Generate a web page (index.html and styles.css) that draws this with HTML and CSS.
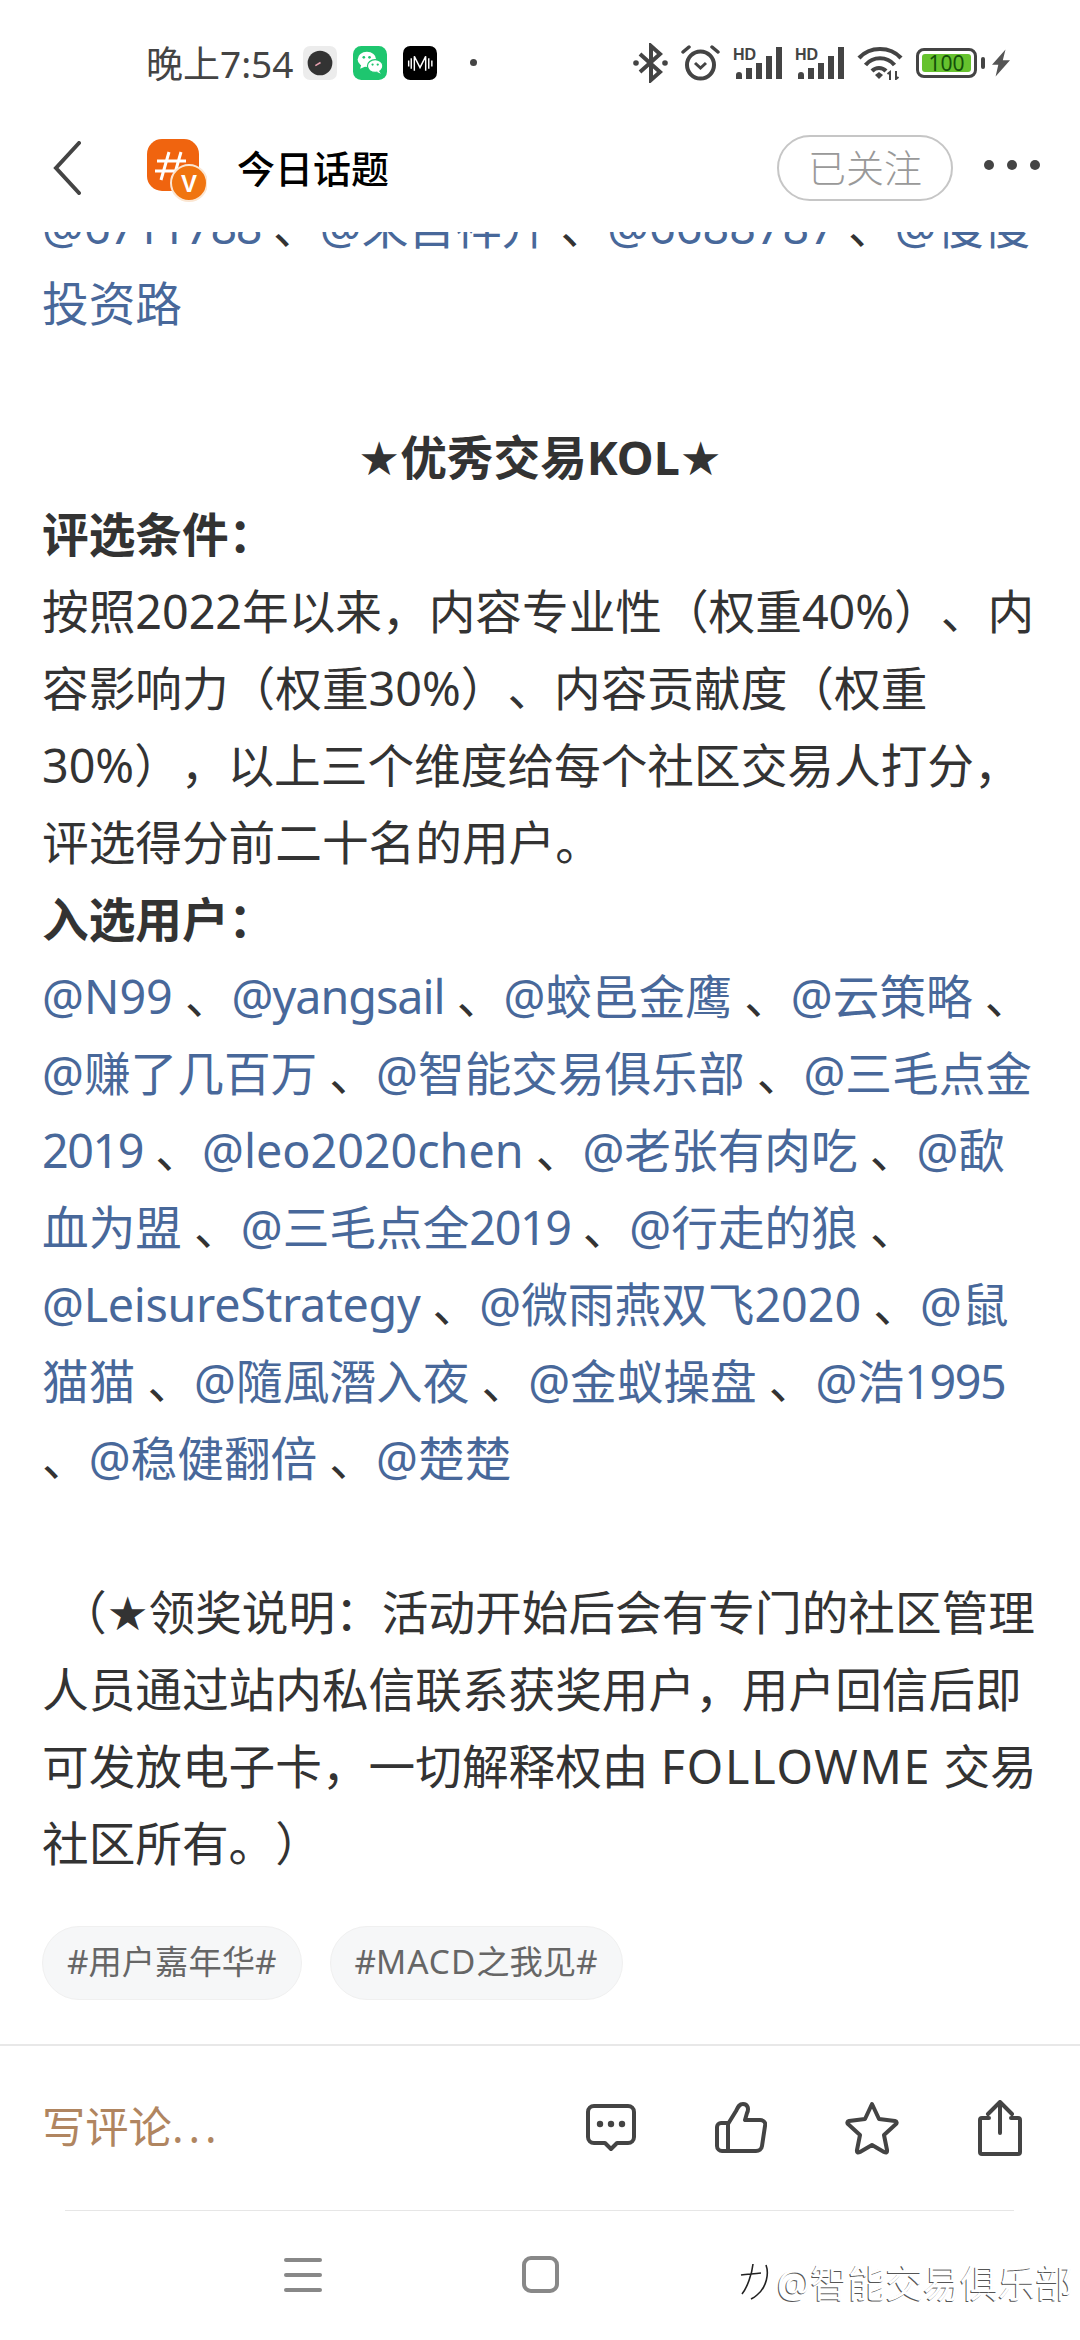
FILE: index.html
```html
<!DOCTYPE html>
<html>
<head>
  <meta charset="utf-8">
  <link rel="stylesheet" href="styles.css">
</head>
<body>
  <div class="statusbar">
    <div class="status-left">
      <span class="time">晚上7:54</span>
      <svg class="app-icon" width="34" height="34" viewBox="0 0 33 33"><rect width="33" height="33" rx="7" fill="#ececec"/><circle cx="16.5" cy="16.5" r="12" fill="#333"/><path d="M12 19l5-3" stroke="#e8a0b0" stroke-width="1.5"/></svg>
      <svg class="app-icon" width="34" height="34" viewBox="0 0 33 33"><rect width="33" height="33" rx="8" fill="#1ec66f"/><ellipse cx="13.5" cy="13" rx="9" ry="7.5" fill="#fff"/><path d="M8 18l-1 4 5-2z" fill="#fff"/><ellipse cx="21.5" cy="19.5" rx="7.5" ry="6.2" fill="#fff" stroke="#1ec66f" stroke-width="1.2"/><path d="M25 24l2 3-4-2z" fill="#fff"/><circle cx="10.5" cy="11" r="1.3" fill="#1ec66f"/><circle cx="16" cy="11" r="1.3" fill="#1ec66f"/><circle cx="19" cy="18" r="1.1" fill="#1ec66f"/><circle cx="24" cy="18" r="1.1" fill="#1ec66f"/></svg>
      <svg class="app-icon" width="34" height="34" viewBox="0 0 33 33"><rect width="33" height="33" rx="7" fill="#000"/><path d="M11 24V10l5.500 11L22 10v14M5.500 14v6M8 12v10M25 12v10M28 14v6" fill="none" stroke="#fff" stroke-width="1.400"/></svg>
      <span class="status-dot"></span>
    </div>
    <div class="status-right">
      <svg width="35" height="40" viewBox="0 0 35 40"><path d="M7 11l20 18-9 8V3l9 8L7 29" fill="none" stroke="#444" stroke-width="4"/><circle cx="3" cy="20" r="2.800" fill="#444"/><circle cx="32" cy="20" r="2.800" fill="#444"/></svg>
      <svg width="39" height="37" viewBox="0 0 39 37"><circle cx="19.500" cy="21" r="13.500" fill="none" stroke="#444" stroke-width="4"/><path d="M14 19l5.500 5 5.500-5" fill="none" stroke="#444" stroke-width="3"/><path d="M2 8l6-5M37 8l-6-5" stroke="#444" stroke-width="3.500" stroke-linecap="round"/></svg>
      <svg width="49" height="33" viewBox="0 0 49 33"><text x="0" y="14" class="hd">HD</text><path d="M3 33v-4a3 3 0 0 1 6 0v4zM13 33V22h6v11zM23 33V17h6v16zM33 33V10h6v23zM43 33V1h6v32z" fill="#444"/></svg>
      <svg width="49" height="33" viewBox="0 0 49 33"><text x="0" y="14" class="hd">HD</text><path d="M3 33v-4a3 3 0 0 1 6 0v4zM13 33V22h6v11zM23 33V17h6v16zM33 33V10h6v23zM43 33V1h6v32z" fill="#444"/></svg>
      <svg width="46" height="35" viewBox="0 0 46 35"><path d="M2 13C13 1 33 1 44 13M8.500 20C16 11 30 11 37.500 20M15 26c4-4 10-4 14 0" fill="none" stroke="#444" stroke-width="4.200"/><path d="M18 30l4-3 4 3-4 4z" fill="#444"/><path d="M33 35v-8l-2.500 2M39 26v8l2.500-2" fill="none" stroke="#444" stroke-width="2"/></svg>
      <div class="battery"><div class="battery-fill">100</div></div>
      <span class="battery-cap"></span>
      <svg class="bolt" width="18" height="30" viewBox="0 0 20 30"><path d="M15 0L0 17h7L4 30 20 12h-8z" fill="#555"/></svg>
    </div>
  </div>

  <div class="navbar">
    <svg class="back" width="28" height="54" viewBox="0 0 28 54"><path d="M26 2L3 27l23 25" fill="none" stroke="#444" stroke-width="4" stroke-linecap="round"/></svg>
    <svg class="logo" width="62" height="64" viewBox="0 0 60 64"><rect x="1" y="1" width="52" height="52" rx="15" fill="#f0640f"/><path d="M23 14L15 42M35 14l-8 28M11 23h29M9 33h24" stroke="#fff" stroke-width="3"/><circle cx="43" cy="45" r="18" fill="#f0740f" stroke="#fbe6d2" stroke-width="2"/><text x="43" y="54" class="logo-v">V</text></svg>
    <span class="nav-title">今日话题</span>
    <span class="follow">已关注</span>
    <div class="more"><span></span><span></span><span></span></div>
  </div>

  <div class="article">
    <div class="article-body">
      <a>@<span class="num">6711788</span></a> 、<a>@来自祥升</a> 、<a>@6688787</a> 、<a>@慢慢</a><br>
      <a>投资路</a><br>
      <br>
      <div class="center"><b>★优秀交易KOL★</b></div>
      <b>评选条件：</b><br>
      按照2022年以来，内容专业性（权重40%）、内<br>
      容影响力（权重30%）、内容贡献度（权重<br>
      30%），以上三个维度给每个社区交易人打分，<br>
      评选得分前二十名的用户。<br>
      <b>入选用户：</b><br>
      <a>@N99</a> 、<a class="tighter">@yangsail</a> 、<a>@蛟邑金鹰</a> 、<a>@云策略</a> 、<br>
      <a>@赚了几百万</a> 、<a>@智能交易俱乐部</a> 、<a>@三毛点金</a><br>
      <a class="num">2019</a> 、<a>@leo2020chen</a> 、<a>@老张有肉吃</a> 、<a>@歃</a><br>
      <a>血为盟</a> 、<a>@三毛点全<span class="num">2019</span></a> 、<a>@行走的狼</a> 、<br>
      <a class="tight">@LeisureStrategy</a> 、<a>@微雨燕双飞2020</a> 、<a>@鼠</a><br>
      <a>猫猫</a> 、<a>@隨風潛入夜</a> 、<a>@金蚁操盘</a> 、<a>@浩<span class="num">1995</span></a><br>
      、<a>@稳健翻倍</a> 、<a>@楚楚</a><br>
      <br>
      <span class="indent"></span>（★领奖说明：活动开始后会有专门的社区管理<br>
      人员通过站内私信联系获奖用户，用户回信后即<br>
      可发放电子卡，一切解释权由 <span class="wide">FOLLOWME</span> 交易<br>
      社区所有。）
    </div>
    <div class="tags">
      <span class="tag">#用户嘉年华#</span>
      <span class="tag">#<span class="tag-latin">MACD</span>之我见#</span>
    </div>
  </div>

  <div class="actionbar">
    <span class="comment-input">写评论<span class="dots">...</span></span>
    <div class="actions">
      <svg width="52" height="50" viewBox="0 0 52 50"><path d="M9 3h34a6 6 0 0 1 6 6v25a6 6 0 0 1-6 6H32l-6 6-6-6H9a6 6 0 0 1-6-6V9a6 6 0 0 1 6-6z" fill="none" stroke="#444" stroke-width="4" stroke-linejoin="round"/><circle cx="15" cy="21" r="3.200" fill="#444"/><circle cx="26" cy="21" r="3.200" fill="#444"/><circle cx="37" cy="21" r="3.200" fill="#444"/></svg>
      <svg width="52" height="52" viewBox="0 0 52 52"><path d="M13 22l8-13c2-4 3-7 7-7 5 0 6 5 4 9l-2 7h15c4 0 6 3 5 6l-3 20c-.5 3-3 5-6 5H7c-2.500 0-5-2-5-5V25c0-2 2-4 4-4h7v29" fill="none" stroke="#444" stroke-width="4" stroke-linejoin="round"/></svg>
      <svg width="54" height="54" viewBox="0 0 54 54"><path d="M27 3l7 15 16 2c2 .5 2 2 1 3L39 34l3 15c.5 3-1 3-3 2l-12-7-12 7c-2 1-3.500 1-3-2l3-15L3 23c-1-1-1-2.500 1-3l16-2z" fill="none" stroke="#444" stroke-width="4" stroke-linejoin="round"/></svg>
      <svg width="46" height="56" viewBox="0 0 44 56"><path d="M11 18H4a2 2 0 0 0-2 2v32a2 2 0 0 0 2 2h36a2 2 0 0 0 2-2V20a2 2 0 0 0-2-2h-7" fill="none" stroke="#444" stroke-width="4" stroke-linecap="round"/><path d="M22 33V3M10 14L22 2l12 12" fill="none" stroke="#444" stroke-width="4" stroke-linecap="round" stroke-linejoin="round"/></svg>
    </div>
  </div>

  <div class="sysnav">
    <div class="menu-key"><span></span><span></span><span></span></div>
    <div class="home-key"></div>
    <div class="watermark">
      <svg width="30" height="42" viewBox="0 0 30 38"><path d="M2 13c6-1 12-1 20-2M14 2c-1 10-6 24-11 30M27 3c3 8 1 22-9 30-2 2-4 3-6 4" fill="none" stroke="#222" stroke-width="1.600"/></svg>
      <span class="watermark-text">@智能交易俱乐部</span>
    </div>
  </div>
</body>
</html>
```

FILE: styles.css
```css
html, body {
  margin: 0;
  padding: 0;
}
body {
  width: 1080px;
  height: 2340px;
  display: flex;
  flex-direction: column;
  overflow: hidden;
  background: #fff;
  font-family: "Noto Sans", "DejaVu Sans", "Noto Sans CJK SC", sans-serif;
  color: #333;
  text-spacing-trim: space-all;
}
.statusbar {
  height: 105px;
  padding: 20px 70px 0 146px;
  box-sizing: border-box;
  display: flex;
  align-items: center;
  justify-content: space-between;
}
.status-left {
  display: flex;
  align-items: center;
}
.time {
  font-size: 37px;
  color: #444;
  margin: -2px 10px 0 0;
}
.app-icon {
  margin-right: 16px;
}
.status-dot {
  width: 7px;
  height: 7px;
  margin-left: 17px;
  border-radius: 50%;
  background: #444;
}
.status-right {
  display: flex;
  align-items: center;
  gap: 13px;
}
.hd {
  font: bold 16px "Liberation Sans", sans-serif;
  fill: #444;
}
.logo-v {
  font: bold 24px "Liberation Sans", sans-serif;
  fill: #fff;
  text-anchor: middle;
}
.battery {
  width: 61px;
  height: 30px;
  box-sizing: border-box;
  padding: 3px;
  border: 3px solid #444;
  border-radius: 8px;
}
.battery-fill {
  height: 100%;
  background: #66c22e;
  border-radius: 3px;
  color: #14500a;
  font-size: 21px;
  line-height: 18px;
  text-align: center;
}
.battery-cap {
  width: 4px;
  height: 12px;
  margin-left: -9px;
  background: #444;
  border-radius: 2px;
}
.bolt {
  margin-left: -6px;
}
.navbar {
  height: 127px;
  display: flex;
  align-items: center;
  box-sizing: border-box;
  padding: 0 40px 2px 0;
}
.back {
  margin-left: 53px;
}
.logo {
  margin-left: 64px;
  margin-top: 4px;
}
.nav-title {
  margin: -3px 0 0 30px;
  font-size: 38px;
  font-weight: 500;
  color: #000;
  flex: 1;
}
.follow {
  width: 176px;
  height: 66px;
  box-sizing: border-box;
  border: 2px solid #c6c6c6;
  border-radius: 33px;
  text-align: center;
  line-height: 60px;
  font-size: 38px;
  font-weight: 300;
  color: #999;
}
.more {
  display: flex;
  gap: 13px;
  margin-left: 31px;
  margin-top: -6px;
}
.more span {
  width: 10px;
  height: 10px;
  border-radius: 50%;
  background: #444;
}
.article {
  flex: 1;
  overflow: hidden;
  padding: 0 42px;
}
.article-body {
  margin-top: -44px;
  font-size: 46.67px;
  line-height: 77px;
  white-space: nowrap;
}
.article-body a {
  color: #48689a;
}
.article-body b {
  font-weight: 700;
}
.tight {
  letter-spacing: -0.3px;
}
.tighter {
  letter-spacing: -1px;
}
.num {
  letter-spacing: -1.4px;
}
.wide {
  letter-spacing: 1.8px;
}
.indent {
  display: inline-block;
  width: 18px;
}
.center {
  text-align: center;
}
.tags {
  display: flex;
  gap: 28px;
  margin-top: 44px;
}
.tag {
  height: 74px;
  padding: 0 24px;
  box-sizing: border-box;
  border: 1px solid #f0f0f0;
  border-radius: 37px;
  background: #f6f7f8;
  font-size: 33.3px;
  line-height: 68px;
  color: #666;
}
.tag-latin {
  letter-spacing: 1px;
}
.actionbar {
  height: 166px;
  box-sizing: border-box;
  border-top: 2px solid #e8e8e8;
  display: flex;
  align-items: center;
  justify-content: space-between;
  padding: 0 57px 0 42px;
}
.comment-input {
  margin-top: -8px;
  font-size: 43.3px;
  color: #b08560;
}
.dots {
  letter-spacing: 5px;
}
.actions {
  display: flex;
  align-items: center;
  gap: 78px;
}
.sysnav {
  position: relative;
  height: 130px;
  box-sizing: border-box;
  margin: 0 66px 0 65px;
  border-top: 1px solid #e6e6e6;
  display: flex;
  align-items: center;
  padding: 0 0 0 219px;
}
.menu-key {
  display: flex;
  flex-direction: column;
  gap: 11px;
  width: 38px;
  margin-top: -2px;
}
.menu-key span {
  height: 4px;
  border-radius: 2px;
  background: #888;
}
.home-key {
  width: 37px;
  height: 37px;
  box-sizing: border-box;
  margin-left: 200px;
  margin-top: -2px;
  border: 4px solid #888;
  border-radius: 9px;
}
.watermark {
  position: absolute;
  top: 42px;
  right: -59px;
  display: flex;
  align-items: center;
  gap: 8px;
}
.watermark-text {
  font-size: 37.5px;
  color: #fff;
  text-shadow: -1px 1px 0 #555;
  white-space: nowrap;
}
```
